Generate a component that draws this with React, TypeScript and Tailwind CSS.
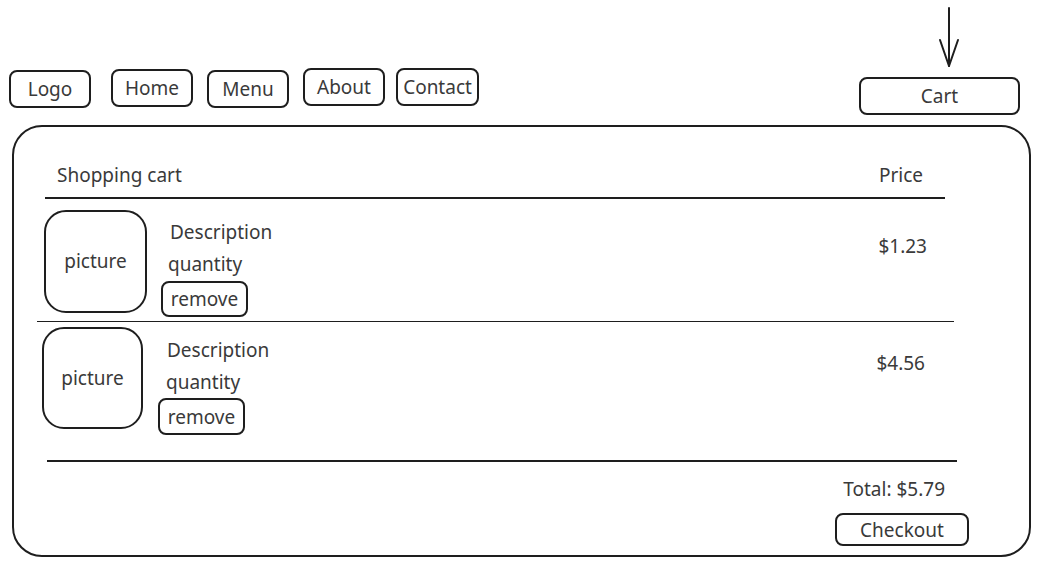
import React from "react";

const font = { fontFamily: '"Noto Sans", "Open Sans", sans-serif' };

function NavBox({ label, cls }: { label: string; cls: string }) {
  return (
    <div
      className={`flex items-center justify-center h-[38px] w-[82px] border-2 border-[#1e1e1e] rounded-[8px] text-[19px] text-[#3a3a3a] ${cls}`}
    >
      {label}
    </div>
  );
}

export default function App() {
  return (
    <div className="w-[1041px] h-[568px] bg-white overflow-hidden text-[#3a3a3a]" style={font}>
      {/* header */}
      <div className="flex h-[125px]">
        <NavBox label="Logo" cls="ml-[9px] mt-[70px]" />
        <NavBox label="Home" cls="ml-[20px] mt-[69px]" />
        <NavBox label="Menu" cls="ml-[14px] mt-[70px]" />
        <NavBox label="About" cls="ml-[14px] mt-[68px]" />
        <NavBox label="Contact" cls="ml-[11px] mt-[68px] w-[83px]" />
        <div className="ml-[380px] flex flex-col">
          <svg width="161" height="77" viewBox="0 0 161 77" className="block">
            <path d="M90 8 L90 66" stroke="#1e1e1e" strokeWidth="2" fill="none" strokeLinecap="round" />
            <path d="M81 40 L90 66 L99 40" stroke="#1e1e1e" strokeWidth="2" fill="none" strokeLinecap="round" strokeLinejoin="round" />
          </svg>
          <div className="flex items-center justify-center w-[161px] h-[38px] border-2 border-[#1e1e1e] rounded-[8px] text-[19px]">
            Cart
          </div>
        </div>
      </div>

      {/* main panel */}
      <div className="ml-[12px] w-[1019px] h-[432px] border-2 border-[#1e1e1e] rounded-[30px]">
        {/* table header */}
        <div className="ml-[31px] w-[900px] pt-[36px] pb-[10px] border-b-2 border-[#1e1e1e] flex justify-between text-[19px] leading-[24px]">
          <span className="pl-[12px]">Shopping cart</span>
          <span className="pr-[22px]">Price</span>
        </div>

        {/* row 1 */}
        <div className="flex mt-[11px]">
          <div className="ml-[30px] w-[103px] h-[103px] border-2 border-[#1e1e1e] rounded-[22px] flex items-center justify-center text-[19px]">
            picture
          </div>
          <div className="ml-[14px] mt-[10px] flex flex-col text-[19px] leading-[24px]">
            <span className="ml-[9px]">Description</span>
            <span className="ml-[7px] mt-[8px]">quantity</span>
            <div className="mt-[5px] w-[87px] h-[36px] border-2 border-[#1e1e1e] rounded-[8px] flex items-center justify-center">
              remove
            </div>
          </div>
          <span className="ml-auto mr-[102px] mt-[24px] text-[19px] leading-[24px]">$1.23</span>
        </div>
        <div className="ml-[23px] mt-[4px] w-[917px] h-px bg-[#1e1e1e]" />

        {/* row 2 */}
        <div className="flex mt-[5px]">
          <div className="ml-[28px] w-[101px] h-[102px] border-2 border-[#1e1e1e] rounded-[22px] flex items-center justify-center text-[19px]">
            picture
          </div>
          <div className="ml-[15px] mt-[11px] flex flex-col text-[19px] leading-[24px]">
            <span className="ml-[9px]">Description</span>
            <span className="ml-[8px] mt-[8px]">quantity</span>
            <div className="mt-[4px] w-[87px] h-[37px] border-2 border-[#1e1e1e] rounded-[8px] flex items-center justify-center">
              remove
            </div>
          </div>
          <span className="ml-auto mr-[104px] mt-[24px] text-[19px] leading-[24px]">$4.56</span>
        </div>
        <div className="ml-[33px] mt-[25px] w-[910px] h-[2px] bg-[#1e1e1e]" />

        {/* total */}
        <div className="flex flex-col items-end mr-[60px] text-[19px] leading-[24px]">
          <span className="mt-[15px] mr-[24px]">Total: $5.79</span>
          <div className="mt-[12px] w-[134px] h-[33px] border-2 border-[#1e1e1e] rounded-[8px] flex items-center justify-center">
            Checkout
          </div>
        </div>
      </div>
    </div>
  );
}
